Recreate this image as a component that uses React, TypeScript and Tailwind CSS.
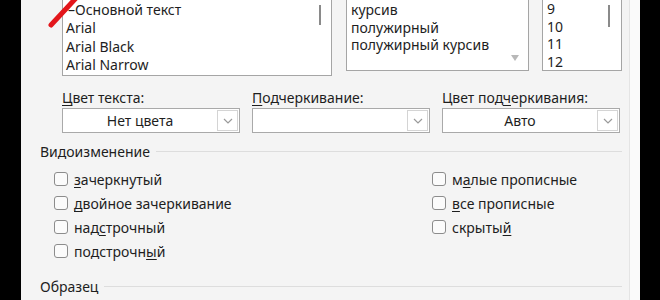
import React from "react";

const Check = ({ label, u }: { label: string; u: number }) => (
  <div className="flex items-center h-[24px]">
    <div className="w-[14px] h-[14px] rounded-[3px] border border-[#8c8c8c] bg-[#fbfbfb]" />
    <span className="ml-[6px]">
      {label.slice(0, u)}
      <span className="underline underline-offset-2">{label[u]}</span>
      {label.slice(u + 1)}
    </span>
  </div>
);

const Chevron = () => (
  <div className="w-[21px] h-[21px] mr-[1px] border border-[#d4d4d4] bg-white flex items-center justify-center">
    <svg width="10" height="6" viewBox="0 0 10 6">
      <path d="M1 1 L5 5 L9 1" fill="none" stroke="#9a9a9a" strokeWidth="1.2" />
    </svg>
  </div>
);

const Select = ({ value }: { value: string }) => (
  <div className="w-[178px] h-[25px] border border-[#a9a9a9] bg-white flex items-center">
    <span className="flex-1 text-center">{value}</span>
    <Chevron />
  </div>
);

const Section = ({ title }: { title: string }) => (
  <div className="flex items-center h-[20px]">
    <span>{title}</span>
    <div className="flex-1 ml-[6px] h-px bg-[#dddddd]" />
  </div>
);

export default function App() {
  return (
    <div className="w-[660px] h-[300px] bg-black flex overflow-hidden font-['Noto_Sans',sans-serif] text-[14px] text-[#1e1e1e]">
      <div className="ml-[21px] w-[619px] h-full bg-[#f4f4f4] flex relative">
        <div className="flex-1 pl-[19px] pr-[7px]">
          {/* list boxes */}
          <div className="flex ml-[22px]">
            <div className="w-[270px] h-[76px] border-x border-b border-[#a5a5a5] bg-white relative pl-[3px] leading-[18.3px] pt-[1px]">
              <div className="pl-[2px]">–Основной текст</div>
              <div>Arial</div>
              <div>Arial Black</div>
              <div>Arial Narrow</div>
              <div className="absolute right-[10px] top-[5px] w-[2px] h-[20px] bg-[#8a8a8a]" />
            </div>
            <div className="ml-[14px] w-[183px] h-[71px] border-x border-b border-[#a5a5a5] bg-white relative pl-[4px] leading-[17.5px] pt-[1px]">
              <div>курсив</div>
              <div>полужирный</div>
              <div>полужирный курсив</div>
              <div className="absolute right-[9px] bottom-[9px] w-0 h-0 border-x-[4px] border-x-transparent border-t-[6px] border-t-[#b8b8b8]" />
            </div>
            <div className="ml-[13px] w-[80px] h-[71px] border-x border-b border-[#a5a5a5] bg-white relative pl-[4px] leading-[17.5px]">
              <div>9</div>
              <div>10</div>
              <div>11</div>
              <div>12</div>
              <div className="absolute right-[11px] top-[5px] w-[2px] h-[22px] bg-[#8a8a8a]" />
            </div>
          </div>

          {/* colour / underline */}
          <div className="flex ml-[22px] mt-[12px] gap-[12px]">
            <div>
              <div className="h-[20px] leading-[20px]">
                <span className="underline underline-offset-2">Ц</span>вет текста:
              </div>
              <Select value="Нет цвета" />
            </div>
            <div>
              <div className="h-[20px] leading-[20px]">
                <span className="underline underline-offset-2">П</span>одчеркивание:
              </div>
              <div className="w-[178px] h-[25px] border border-[#a9a9a9] bg-white flex items-center justify-end">
                <Chevron />
              </div>
            </div>
            <div>
              <div className="h-[20px] leading-[20px]">
                Цвет под<span className="underline underline-offset-2">ч</span>еркивания:
              </div>
              <Select value="Авто" />
            </div>
          </div>

          <div className="mt-[8px]">
            <Section title="Видоизменение" />
          </div>

          <div className="flex mt-[6px]">
            <div className="ml-[14px] w-[378px]">
              <Check label="зачеркнутый" u={0} />
              <Check label="двойное зачеркивание" u={0} />
              <Check label="надстрочный" u={3} />
              <Check label="подстрочный" u={9} />
            </div>
            <div>
              <Check label="малые прописные" u={1} />
              <Check label="все прописные" u={0} />
              <Check label="скрытый" u={6} />
            </div>
          </div>

          <div className="mt-[13px]">
            <Section title="Образец" />
          </div>
        </div>
        <div className="w-[12px] h-full bg-[#fafafa] border-l border-[#e4e4e4]" />

        <svg className="absolute left-[22px] top-[-8px]" width="40" height="40" viewBox="0 0 40 40">
          <path d="M8 33 L34 5" stroke="#e3161b" strokeWidth="5" strokeLinecap="round" />
        </svg>
      </div>
    </div>
  );
}
